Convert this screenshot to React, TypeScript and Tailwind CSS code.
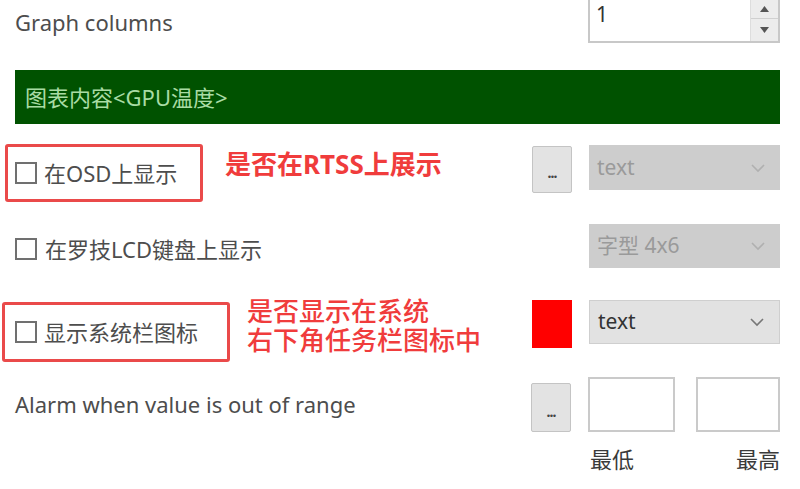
import React from "react";

function Checkbox() {
  return <div className="w-[22px] h-[22px] border-2 border-[#707070] bg-white shrink-0" />;
}

function Chevron({ color }: { color: string }) {
  return (
    <svg width="16" height="10" viewBox="0 0 16 10" fill="none">
      <path d="M2 2 L8 8 L14 2" stroke={color} strokeWidth="1.6" />
    </svg>
  );
}

function DotsButton({ className }: { className: string }) {
  return (
    <div className={`w-[40px] bg-[#e3e3e3] border border-[#c4c4c4] rounded-[2px] flex items-end justify-center pb-[12px] shrink-0 ${className}`}>
      <span className="text-[14px] leading-none text-[#444] font-bold tracking-[-1px]">...</span>
    </div>
  );
}

export default function App() {
  return (
    <div className="w-[800px] h-[489px] bg-white overflow-hidden font-['Noto_Sans','Noto_Sans_CJK_SC',sans-serif] text-[#4d4d4d]">
      {/* Row 1 */}
      <div className="h-[43px] flex items-start pr-[20px]">
        <div className="pl-[15px] pt-[7px] text-[22px] leading-[30px] flex-1">Graph columns</div>
        <div className="w-[192px] h-[43px] border-2 border-t-0 border-[#c8c8c8] flex bg-white">
          <div className="flex-1 pl-[6px] pt-[1px] text-[21px] leading-[26px] text-[#333]">1</div>
          <div className="w-[28px] flex flex-col border-l border-[#ddd]">
            <div className="h-[19px] bg-[#ececec] flex items-center justify-center border-b border-[#d0d0d0]">
              <svg width="9" height="6" viewBox="0 0 9 6"><path d="M0 6 L4.5 0 L9 6 Z" fill="#555" /></svg>
            </div>
            <div className="flex-1 bg-[#ececec] flex items-center justify-center">
              <svg width="9" height="6" viewBox="0 0 9 6"><path d="M0 0 L4.5 6 L9 0 Z" fill="#555" /></svg>
            </div>
          </div>
        </div>
      </div>

      {/* Row 2 green bar */}
      <div className="mt-[27px] ml-[15px] mr-[20px] h-[54px] bg-[#005200] flex items-center pl-[10px] text-[22px] text-[#a9dca4]">
        图表内容&lt;GPU温度&gt;
      </div>

      {/* Row 3 */}
      <div className="mt-[20px] h-[58px] flex items-start pr-[20px]">
        <div className="ml-[5px] w-[198px] h-[58px] border-[3px] border-[#ea4a4a] rounded-[3px] flex items-center pl-[7px] gap-[7px] text-[22px]">
          <Checkbox />
          <span>在OSD上显示</span>
        </div>
        <div className="ml-[22px] mt-[3px] text-[26px] font-bold leading-[34px] text-[#f03c3c] flex-1">是否在RTSS上展示</div>
        <DotsButton className="h-[47px] mt-[2px]" />
        <div className="ml-[17px] w-[191px] h-[45px] mt-[1px] bg-[#cdcdcd] flex items-center justify-between pl-[8px] pr-[14px] text-[21px] text-[#9a9a9a]">
          <span>text</span>
          <Chevron color="#b0b0b0" />
        </div>
      </div>

      {/* Row 4 */}
      <div className="mt-[22px] h-[44px] flex items-center pr-[20px]">
        <div className="pl-[15px] flex items-center gap-[8px] flex-1 text-[22px] mt-[6px]">
          <Checkbox />
          <span>在罗技LCD键盘上显示</span>
        </div>
        <div className="w-[191px] h-[44px] bg-[#cdcdcd] flex items-center justify-between pl-[8px] pr-[14px] text-[21px] text-[#9a9a9a]">
          <span>字型 4x6</span>
          <Chevron color="#b0b0b0" />
        </div>
      </div>

      {/* Row 5 */}
      <div className="mt-[32px] h-[62px] flex items-start pr-[20px]">
        <div className="ml-[2px] mt-[2px] w-[228px] h-[60px] border-[3px] border-[#ea4a4a] rounded-[3px] flex items-center pl-[10px] gap-[7px] text-[22px]">
          <Checkbox />
          <span>显示系统栏图标</span>
        </div>
        <p className="ml-[17px] -mt-[3px] text-[26px] leading-[29px] font-medium text-[#f03c3c] flex-1">
          是否显示在系统
          <br />
          右下角任务栏图标中
        </p>
        <div className="w-[40px] h-[48px] bg-[#ff0000] shrink-0" />
        <div className="ml-[17px] w-[191px] h-[44px] bg-[#e2e2e2] border border-[#cfcfcf] flex items-center justify-between pl-[8px] pr-[14px] text-[21px] text-[#333]">
          <span>text</span>
          <Chevron color="#777" />
        </div>
      </div>

      {/* Row 6 */}
      <div className="mt-[15px] h-[55px] flex items-start pr-[20px]">
        <div className="pl-[15px] flex-1 text-[22px] mt-[12px] leading-[30px]">Alarm when value is out of range</div>
        <DotsButton className="h-[49px] mt-[6px]" />
        <div className="ml-[17px] w-[87px] h-[55px] border-2 border-[#cacaca] bg-white" />
        <div className="ml-[21px] w-[84px] h-[55px] border-2 border-[#cacaca] bg-white" />
      </div>

      {/* Row 7 */}
      <div className="mt-[12px] flex pr-[20px] text-[22px] text-[#3a3a3a] leading-[30px]">
        <div className="flex-1" />
        <div className="w-[191px] flex justify-between pl-[1px]">
          <span>最低</span>
          <span>最高</span>
        </div>
      </div>
    </div>
  );
}
